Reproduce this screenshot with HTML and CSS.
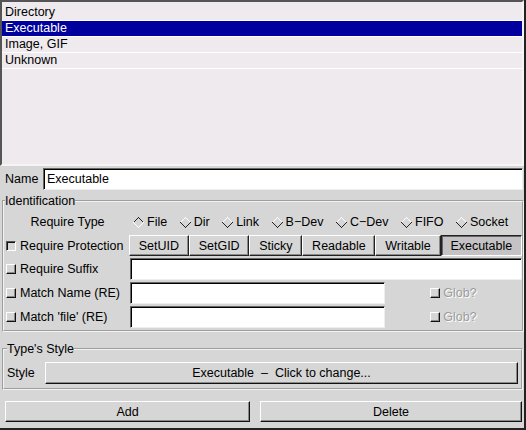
FILE: index.html
```html
<!DOCTYPE html>
<html lang="en">
<head>
    <meta charset="UTF-8">
    <title>File Types</title>
    <link rel="stylesheet" href="styles.css">
</head>
<body>
    <div class="window">
        <div class="type-list">
            <div class="type-item">Directory</div>
            <div class="type-item selected">Executable</div>
            <div class="type-item">Image, GIF</div>
            <div class="type-item">Unknown</div>
        </div>

        <div class="name-row">
            <label for="type-name">Name</label>
            <input class="entry" id="type-name" type="text" value="Executable">
        </div>

        <fieldset class="frame ident">
            <legend>Identification</legend>

            <div class="id-row type-row">
                <div class="id-label centered">Require Type</div>
                <div class="radios">
                    <span class="radio on"><svg width="11" height="11" viewBox="0 0 11 11"><polygon points="5.5,0.5 10.5,5.5 5.5,10.5 0.5,5.5" fill="#d6d6d6"/><polyline points="0.5,5.5 5.5,0.5 10.5,5.5" fill="none" stroke="#222"/><polyline points="0.5,5.5 5.5,10.5 10.5,5.5" fill="none" stroke="#fff"/></svg>File</span>
                    <span class="radio"><svg width="11" height="11" viewBox="0 0 11 11"><polygon points="5.5,0.5 10.5,5.5 5.5,10.5 0.5,5.5" fill="#d6d6d6"/><polyline points="0.5,5.5 5.5,0.5 10.5,5.5" fill="none" stroke="#fff"/><polyline points="0.5,5.5 5.5,10.5 10.5,5.5" fill="none" stroke="#222"/></svg>Dir</span>
                    <span class="radio"><svg width="11" height="11" viewBox="0 0 11 11"><polygon points="5.5,0.5 10.5,5.5 5.5,10.5 0.5,5.5" fill="#d6d6d6"/><polyline points="0.5,5.5 5.5,0.5 10.5,5.5" fill="none" stroke="#fff"/><polyline points="0.5,5.5 5.5,10.5 10.5,5.5" fill="none" stroke="#222"/></svg>Link</span>
                    <span class="radio"><svg width="11" height="11" viewBox="0 0 11 11"><polygon points="5.5,0.5 10.5,5.5 5.5,10.5 0.5,5.5" fill="#d6d6d6"/><polyline points="0.5,5.5 5.5,0.5 10.5,5.5" fill="none" stroke="#fff"/><polyline points="0.5,5.5 5.5,10.5 10.5,5.5" fill="none" stroke="#222"/></svg>B&#8722;Dev</span>
                    <span class="radio"><svg width="11" height="11" viewBox="0 0 11 11"><polygon points="5.5,0.5 10.5,5.5 5.5,10.5 0.5,5.5" fill="#d6d6d6"/><polyline points="0.5,5.5 5.5,0.5 10.5,5.5" fill="none" stroke="#fff"/><polyline points="0.5,5.5 5.5,10.5 10.5,5.5" fill="none" stroke="#222"/></svg>C&#8722;Dev</span>
                    <span class="radio"><svg width="11" height="11" viewBox="0 0 11 11"><polygon points="5.5,0.5 10.5,5.5 5.5,10.5 0.5,5.5" fill="#d6d6d6"/><polyline points="0.5,5.5 5.5,0.5 10.5,5.5" fill="none" stroke="#fff"/><polyline points="0.5,5.5 5.5,10.5 10.5,5.5" fill="none" stroke="#222"/></svg>FIFO</span>
                    <span class="radio"><svg width="11" height="11" viewBox="0 0 11 11"><polygon points="5.5,0.5 10.5,5.5 5.5,10.5 0.5,5.5" fill="#d6d6d6"/><polyline points="0.5,5.5 5.5,0.5 10.5,5.5" fill="none" stroke="#fff"/><polyline points="0.5,5.5 5.5,10.5 10.5,5.5" fill="none" stroke="#222"/></svg>Socket</span>
                </div>
            </div>

            <div class="id-row prot-row">
                <div class="id-label"><span class="check on"></span>Require Protection</div>
                <div class="toggles">
                    <button class="toggle">SetUID</button>
                    <button class="toggle">SetGID</button>
                    <button class="toggle">Sticky</button>
                    <button class="toggle">Readable</button>
                    <button class="toggle">Writable</button>
                    <button class="toggle pressed">Executable</button>
                </div>
            </div>

            <div class="id-row">
                <div class="id-label"><span class="check"></span>Require Suffix</div>
                <input class="entry wide" type="text">
            </div>

            <div class="id-row">
                <div class="id-label"><span class="check"></span>Match Name (RE)</div>
                <input class="entry short" type="text">
                <div class="glob"><span class="check"></span>Glob?</div>
            </div>

            <div class="id-row">
                <div class="id-label"><span class="check"></span>Match 'file' (RE)</div>
                <input class="entry short" type="text">
                <div class="glob"><span class="check"></span>Glob?</div>
            </div>
        </fieldset>

        <fieldset class="frame style-frame">
            <legend>Type's Style</legend>
            <div class="style-row">
                <span class="style-label">Style</span>
                <button class="btn style-btn">Executable&nbsp; &#8211;&nbsp; Click to change...</button>
            </div>
        </fieldset>

        <div class="actions">
            <button class="btn">Add</button>
            <button class="btn">Delete</button>
        </div>
    </div>
</body>
</html>
```

FILE: styles.css
```css
* {
    box-sizing: border-box;
}

body {
    margin: 0;
    font-family: "Liberation Sans", Arial, sans-serif;
    font-size: 12.5px;
    color: #000;
    background-color: #d6d6d6;
}

button,
input {
    font: inherit;
    color: inherit;
    margin: 0;
}

.window {
    width: 526px;
    height: 430px;
    display: flex;
    flex-direction: column;
    border-right: 2px solid #222;
    border-bottom: 2px solid #222;
    background-color: #d6d6d6;
}

/* Type list */
.type-list {
    height: 166px;
    padding-top: 3px;
    background-color: #eeeaee;
    border: 2px solid;
    border-color: #555 #f4f4f4 #f4f4f4 #555;
}

.type-item {
    height: 16px;
    line-height: 15px;
    padding-left: 3px;
    border-bottom: 1px solid #fff;
}

.type-item.selected {
    background-color: #00009e;
    color: #fff;
}

/* Name */
.name-row {
    display: flex;
    align-items: center;
    height: 22px;
    margin-top: 2px;
    margin-right: 1px;
}

.name-row label {
    width: 43px;
    padding-left: 5px;
}

.entry {
    height: 22px;
    padding: 0 3px;
    background-color: #fff;
    border: 1px solid;
    border-color: #666 #eee #eee #666;
    box-shadow: inset 1px 1px 0 #000;
    outline: none;
}

.name-row .entry {
    flex: 1;
}

/* Frames */
.frame {
    margin: 0;
    border: 2px groove #f2f2f2;
    min-width: 0;
}

.frame legend {
    padding: 0;
    line-height: 14px;
}

.ident {
    margin: 4px 0 0 2px;
    padding: 4px 0 2px 1px;
}

.id-row {
    display: flex;
    align-items: center;
    height: 22px;
    margin-top: 2px;
}

.id-row.type-row {
    height: 20px;
    margin-top: 0;
}

.id-row.prot-row {
    height: 21px;
    margin-top: 3px;
}

.id-label {
    width: 124px;
    flex-shrink: 0;
    display: flex;
    align-items: center;
    gap: 4px;
    padding-left: 1px;
    white-space: nowrap;
}

.id-label.centered {
    justify-content: center;
}

.radios {
    display: flex;
    align-items: center;
    gap: 12.5px;
    padding-left: 4px;
}

.radio {
    display: flex;
    align-items: center;
    gap: 3px;
}

.radio svg {
    display: block;
    shape-rendering: crispEdges;
}

.check {
    width: 10px;
    height: 10px;
    flex-shrink: 0;
    background-color: #d6d6d6;
    border: 1px solid;
    border-color: #fff #111 #111 #fff;
    box-shadow: inset -1px -1px 0 #8a8a8a;
}

.check.on {
    border-color: #555 #fff #fff #555;
    box-shadow: inset 1px 1px 0 #111;
}

.toggles {
    flex: 1;
    display: flex;
    height: 21px;
}

.toggle {
    flex: 1 1 auto;
    padding: 0 8px;
    background-color: #d6d6d6;
    border: 1px solid;
    border-color: #fff #222 #222 #fff;
    box-shadow: inset -1px -1px 0 #8a8a8a;
}

.toggle.pressed {
    background-color: #c4c2c4;
    border-color: #222 #fff #fff #222;
    box-shadow: inset 1px 1px 0 #666;
}

.entry.wide {
    flex: 1;
    margin-left: 1px;
}

.entry.short {
    width: 255px;
    margin-left: 1px;
}

.glob {
    flex: 1;
    display: flex;
    align-items: center;
    justify-content: center;
    gap: 3px;
    color: #9c9c9c;
    text-shadow: 1px 1px 0 #fff;
}

/* Type's style */
.style-frame {
    margin: 10px 1px 0 2px;
    padding: 6px 3px 4px 3px;
}

.style-row {
    display: flex;
    align-items: center;
}

.style-label {
    width: 38px;
}

.btn {
    height: 22px;
    background-color: #d6d6d6;
    border: 1px solid;
    border-color: #fff #111 #111 #fff;
    box-shadow: inset -1px -1px 0 #8a8a8a;
}

.style-btn {
    flex: 1;
}

/* Add / Delete */
.actions {
    display: grid;
    grid-template-columns: 245px 262px;
    column-gap: 10px;
    margin-top: 11px;
    padding-left: 5px;
}

.actions .btn {
    height: 21px;
}
```
